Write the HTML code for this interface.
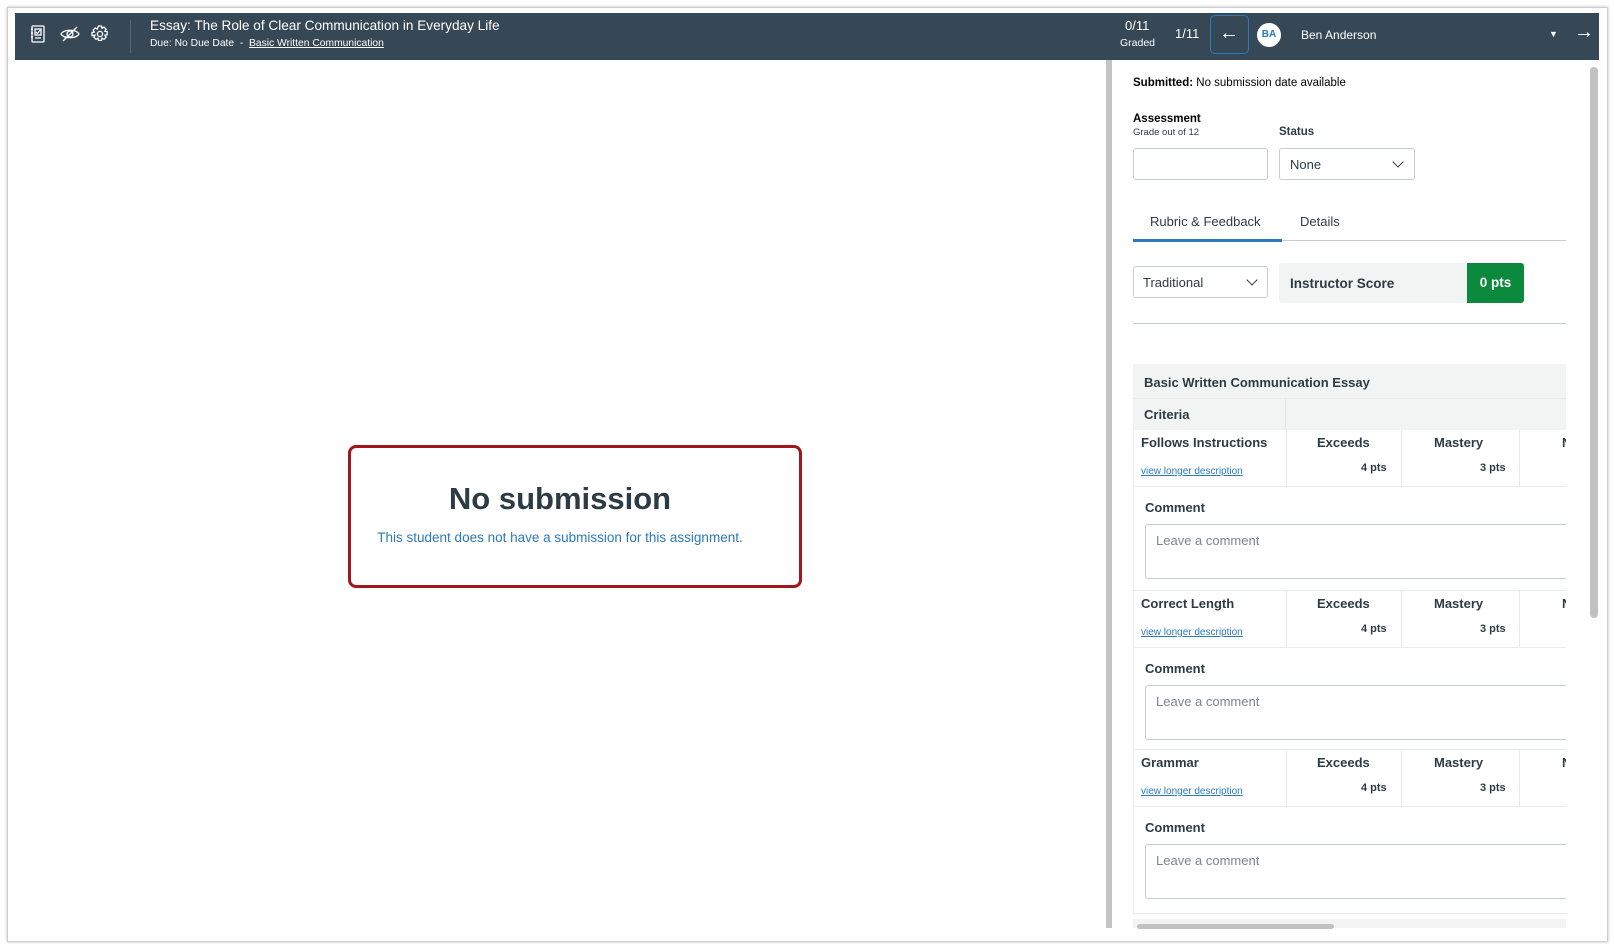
<!DOCTYPE html>
<html><head><meta charset="utf-8"><style>
*{box-sizing:border-box;margin:0;padding:0}
body{width:1614px;height:944px;background:#fff;font-family:"Liberation Sans",Arial,sans-serif;color:#2d3b45;position:relative;overflow:hidden}
.a{position:absolute;white-space:nowrap}
.frame{left:7px;top:7px;width:1601px;height:935px;border:1px solid #cfcfcf;box-shadow:0 0 3px rgba(0,0,0,.25)}
.hdr{left:15px;top:13px;width:1584px;height:47px;background:#364755;color:#fff}
.inp{border:1px solid #c7cdd1;border-radius:3px;background:#fff}
.b{font-weight:bold}
.lnk{color:#2b7abc;text-decoration:underline;font-size:10px}
.cell{position:absolute;top:0;height:100%;border-left:1px solid #e8eaec}
.chev{position:absolute;width:8px;height:8px;border-right:1.3px solid #2d3b45;border-bottom:1.3px solid #2d3b45;transform:rotate(45deg)}
.rw{overflow:hidden}
</style></head><body>
<div class="a frame"></div>
<div class="a hdr">
  <svg class="a" style="left:15px;top:12px" width="16" height="18" viewBox="0 0 16 18" fill="none" stroke="#fff" stroke-width="1.3"><rect x="2" y="1" width="12" height="16" rx="1"/><rect x="5" y="4" width="6" height="6"/><path d="M6 7l1.5 1.5L10 5M5 13h6M1 4h2M1 8h2M1 12h2"/></svg>
  <svg class="a" style="left:45px;top:13px" width="20" height="16" viewBox="0 0 20 16" fill="none" stroke="#fff" stroke-width="1.3"><path d="M1 8c3-5 15-5 18 0c-3 5-15 5-18 0z"/><circle cx="10" cy="8" r="3"/><path d="M3 15L17 1"/></svg>
  <svg class="a" style="left:76px;top:12px" width="18" height="18" viewBox="0 0 18 18" fill="none" stroke="#fff" stroke-width="1.3"><circle cx="9" cy="9" r="2.6"/><path d="M7.5 1h3l.5 2.3 2-1.2 2.1 2.1-1.2 2 2.3.5v3l-2.3.5 1.2 2-2.1 2.1-2-1.2-.5 2.3h-3l-.5-2.3-2 1.2-2.1-2.1 1.2-2L1 10.5v-3l2.3-.5-1.2-2 2.1-2.1 2 1.2z"/></svg>
  <div class="a" style="left:115px;top:7px;width:1px;height:33px;background:#5a6b77"></div>
  <div class="a" style="left:135px;top:5px;font-size:13.6px">Essay: The Role of Clear Communication in Everyday Life</div>
  <div class="a" style="left:135px;top:25px;font-size:10.3px">Due: No Due Date &nbsp;- &nbsp;<span style="text-decoration:underline">Basic Written Communication</span></div>
  <div class="a" style="left:1110px;top:5px;font-size:13px">0/11</div>
  <div class="a" style="left:1105px;top:24px;font-size:10.5px">Graded</div>
  <div class="a" style="left:1160px;top:13px;font-size:13px">1/11</div>
  <div class="a" style="left:1195px;top:2px;width:39px;height:39px;border:1px solid #2b7abc;border-radius:5px"></div>
  <div class="a" style="left:1204px;top:9px;font-size:20px">&larr;</div>
  <div class="a" style="left:1242px;top:10px;width:24px;height:24px;border-radius:50%;background:#fff;color:#2b7abc;font-size:10px;font-weight:bold;text-align:center;line-height:24px">BA</div>
  <div class="a" style="left:1286px;top:15px;font-size:12px">Ben Anderson</div>
  <div class="a" style="left:1534px;top:16px;font-size:9px">&#9660;</div>
  <div class="a" style="left:1559px;top:8px;font-size:20px">&rarr;</div>
</div>
<div class="a" style="left:1106px;top:60px;width:6px;height:868px;background:#c4c4c4"></div>
<div class="a" style="left:348px;top:445px;width:454px;height:143px;border:3px solid #a0161b;border-radius:8px"></div>
<div class="a b" style="left:318px;width:484px;text-align:center;top:481px;font-size:31px;color:#2d3b45">No submission</div>
<div class="a" style="left:318px;width:484px;text-align:center;top:530px;font-size:13.5px;color:#2b7abc">This student does not have a submission for this assignment.</div>
<div class="a" style="left:1590px;top:67px;width:8px;height:551px;background:#c1c1c1;border-radius:4px"></div>
<div class="a" style="left:1133px;top:77px;font-size:11.5px;color:#000"><b>Submitted:</b> No submission date available</div>
<div class="a b" style="left:1133px;top:113px;font-size:11.5px;color:#000">Assessment</div>
<div class="a" style="left:1133px;top:127px;font-size:9.5px">Grade out of 12</div>
<div class="a b" style="left:1279px;top:126px;font-size:11.5px">Status</div>
<div class="a inp" style="left:1133px;top:148px;width:135px;height:32px"></div>
<div class="a inp" style="left:1279px;top:148px;width:136px;height:32px"></div>
<div class="a" style="left:1290px;top:157px;font-size:13px">None</div>
<div class="chev" style="left:1394px;top:158px"></div>
<div class="a" style="left:1150px;top:214px;font-size:13px">Rubric &amp; Feedback</div>
<div class="a" style="left:1300px;top:214px;font-size:13px">Details</div>
<div class="a" style="left:1133px;top:240px;width:433px;height:1px;background:#c7cdd1"></div>
<div class="a" style="left:1133px;top:239px;width:149px;height:3px;background:#2b7abc"></div>
<div class="a inp" style="left:1133px;top:266px;width:135px;height:32px"></div>
<div class="a" style="left:1143px;top:275px;font-size:13px">Traditional</div>
<div class="chev" style="left:1248px;top:276px"></div>
<div class="a" style="left:1279px;top:263px;width:245px;height:40px;background:#f2f4f4;border-radius:3px"></div>
<div class="a b" style="left:1290px;top:276px;font-size:13.5px">Instructor Score</div>
<div class="a b" style="left:1467px;top:263px;width:57px;height:40px;background:#0b8a3e;color:#fff;border-radius:0 3px 3px 0;font-size:13.5px;text-align:center;line-height:40px">0 pts</div>
<div class="a" style="left:1133px;top:323px;width:433px;height:1px;background:#c7cdd1"></div>
<div class="a" style="left:1133px;top:364px;width:433px;height:66px;background:#f2f4f4"></div>
<div class="a b" style="left:1144px;top:375px;font-size:13px">Basic Written Communication Essay</div>
<div class="a" style="left:1133px;top:398px;width:433px;height:1px;background:#e8eaec"></div>
<div class="a" style="left:1285px;top:398px;width:1px;height:32px;background:#e4e6e8"></div>
<div class="a b" style="left:1144px;top:407px;font-size:13px">Criteria</div>

<div class="a rw" style="left:1133px;top:430px;width:433px;height:159px;border-left:1px solid #eee">
  <div class="a" style="left:0;top:0;width:433px;height:57px;border-bottom:1px solid #e8eaec">
    <div class="cell" style="left:152px"></div><div class="cell" style="left:267px"></div><div class="cell" style="left:385px"></div>
    <div class="a b" style="left:7px;top:5px;font-size:13px">Follows Instructions</div>
    <div class="a lnk" style="left:7px;top:36px">view longer description</div>
    <div class="a b" style="left:183px;top:5px;font-size:13px">Exceeds</div>
    <div class="a b" style="left:227px;top:32px;font-size:11px">4 pts</div>
    <div class="a b" style="left:300px;top:5px;font-size:13px">Mastery</div>
    <div class="a b" style="left:346px;top:32px;font-size:11px">3 pts</div>
    <div class="a b" style="left:428px;top:5px;font-size:13px">N</div>
  </div>
  <div class="a b" style="left:11px;top:70px;font-size:13px">Comment</div>
  <div class="a inp" style="left:11px;top:94px;width:440px;height:55px"></div>
  <div class="a" style="left:22px;top:103px;font-size:13px;color:#7b8590">Leave a comment</div>
</div>
<div class="a rw" style="left:1133px;top:590px;width:433px;height:159px;border-left:1px solid #eee;border-top:1px solid #e8eaec">
  <div class="a" style="left:0;top:0;width:433px;height:57px;border-bottom:1px solid #e8eaec">
    <div class="cell" style="left:152px"></div><div class="cell" style="left:267px"></div><div class="cell" style="left:385px"></div>
    <div class="a b" style="left:7px;top:5px;font-size:13px">Correct Length</div>
    <div class="a lnk" style="left:7px;top:36px">view longer description</div>
    <div class="a b" style="left:183px;top:5px;font-size:13px">Exceeds</div>
    <div class="a b" style="left:227px;top:32px;font-size:11px">4 pts</div>
    <div class="a b" style="left:300px;top:5px;font-size:13px">Mastery</div>
    <div class="a b" style="left:346px;top:32px;font-size:11px">3 pts</div>
    <div class="a b" style="left:428px;top:5px;font-size:13px">N</div>
  </div>
  <div class="a b" style="left:11px;top:70px;font-size:13px">Comment</div>
  <div class="a inp" style="left:11px;top:94px;width:440px;height:55px"></div>
  <div class="a" style="left:22px;top:103px;font-size:13px;color:#7b8590">Leave a comment</div>
</div>
<div class="a rw" style="left:1133px;top:749px;width:433px;height:165px;border-left:1px solid #eee;border-top:1px solid #e8eaec;border-bottom:1px solid #e8eaec">
  <div class="a" style="left:0;top:0;width:433px;height:57px;border-bottom:1px solid #e8eaec">
    <div class="cell" style="left:152px"></div><div class="cell" style="left:267px"></div><div class="cell" style="left:385px"></div>
    <div class="a b" style="left:7px;top:5px;font-size:13px">Grammar</div>
    <div class="a lnk" style="left:7px;top:36px">view longer description</div>
    <div class="a b" style="left:183px;top:5px;font-size:13px">Exceeds</div>
    <div class="a b" style="left:227px;top:32px;font-size:11px">4 pts</div>
    <div class="a b" style="left:300px;top:5px;font-size:13px">Mastery</div>
    <div class="a b" style="left:346px;top:32px;font-size:11px">3 pts</div>
    <div class="a b" style="left:428px;top:5px;font-size:13px">N</div>
  </div>
  <div class="a b" style="left:11px;top:70px;font-size:13px">Comment</div>
  <div class="a inp" style="left:11px;top:94px;width:440px;height:55px"></div>
  <div class="a" style="left:22px;top:103px;font-size:13px;color:#7b8590">Leave a comment</div>
</div>
<div class="a" style="left:1133px;top:919px;width:433px;height:9px;background:#f3f3f3"></div>
<div class="a" style="left:1137px;top:924px;width:197px;height:5px;background:#c1c1c1;border-radius:3px"></div>
</body></html>
